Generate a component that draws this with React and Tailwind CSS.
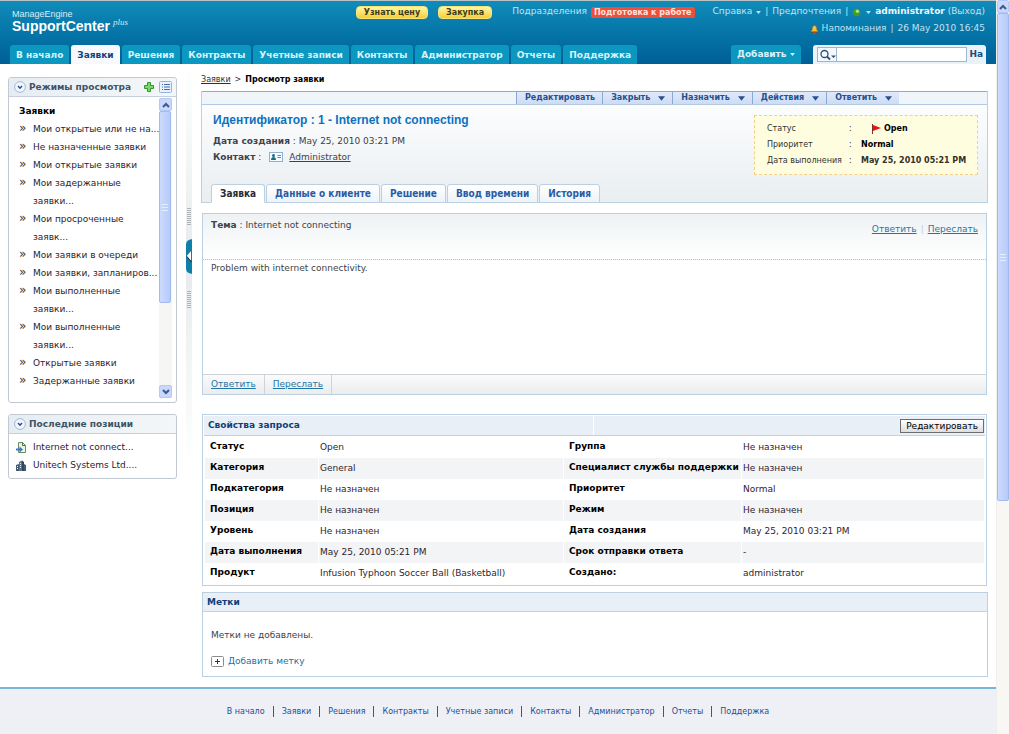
import React, { useState } from 'react'

const NAV = ['В начало', 'Заявки', 'Решения', 'Контракты', 'Учетные записи', 'Контакты', 'Администратор', 'Отчеты', 'Поддержка']

const VIEWS = [
  ['Мои открытые или не на...'],
  ['Не назначенные заявки'],
  ['Мои открытые заявки'],
  ['Мои задержанные', 'заявки...'],
  ['Мои просроченные', 'заявк...'],
  ['Мои заявки в очереди'],
  ['Мои заявки, запланиров...'],
  ['Мои выполненные', 'заявки...'],
  ['Мои выполненные', 'заявки...'],
  ['Открытые заявки'],
  ['Задержанные заявки'],
]

const ACTIONS = [
  { label: 'Редактировать', menu: false },
  { label: 'Закрыть', menu: true },
  { label: 'Назначить', menu: true },
  { label: 'Действия', menu: true },
  { label: 'Ответить', menu: true },
]

const TABS = ['Заявка', 'Данные о клиенте', 'Решение', 'Ввод времени', 'История']

const PROPS = [
  ['Статус', 'Open', 'Группа', 'Не назначен'],
  ['Категория', 'General', 'Специалист службы поддержки', 'Не назначен'],
  ['Подкатегория', 'Не назначен', 'Приоритет', 'Normal'],
  ['Позиция', 'Не назначен', 'Режим', 'Не назначен'],
  ['Уровень', 'Не назначен', 'Дата создания', 'May 25, 2010 03:21 PM'],
  ['Дата выполнения', 'May 25, 2010 05:21 PM', 'Срок отправки ответа', '-'],
  ['Продукт', 'Infusion Typhoon Soccer Ball (Basketball)', 'Создано:', 'administrator'],
]

const Caret = ({ className }) => (
  <svg className={className} viewBox="0 0 8 5" aria-hidden="true">
    <path d="M0 0h8L4 5z" fill="currentColor" />
  </svg>
)

const Chevron = ({ up }) => (
  <svg className="w-[8px] h-[6px] text-[#3d5a8c]" viewBox="0 0 8 6" fill="none" stroke="currentColor" strokeWidth="2" aria-hidden="true">
    <path d={up ? 'M1 5l3-3 3 3' : 'M1 1l3 3 3-3'} />
  </svg>
)

const ScrollButton = ({ up, label }) => (
  <button
    aria-label={label}
    className="w-full h-[13px] shrink-0 flex items-center justify-center rounded-xs border border-[#b4c8f6] bg-[#c9d8fc]"
  >
    <Chevron up={up} />
  </button>
)

const Thumb = ({ className }) => (
  <div className={`flex items-center justify-center rounded-xs border border-[#a3baf0] bg-gradient-to-r from-[#cbdafd] to-[#b7cbfb] ${className}`}>
    <div className="w-[6px] h-[7px] border-y border-[#e6eefe] flex items-center">
      <div className="w-full h-px bg-[#e6eefe]" />
    </div>
  </div>
)

const Logo = () => (
  <div className="pt-[9px] pl-3 text-white font-['Liberation_Sans',sans-serif]">
    <div className="text-[9px] leading-[9px] text-[#d8eef8]">ManageEngine</div>
    <div className="flex items-start">
      <span className="text-[14px] leading-[15px] font-bold">SupportCenter</span>
      <span className="pl-[3px] text-[9px] leading-[6px] italic text-[#cfe8f5] font-['Liberation_Serif',serif]">plus</span>
    </div>
  </div>
)

const TopLinks = () => (
  <div className="pr-[11px] text-[9px] text-[#c3e2f1] whitespace-nowrap">
    <div className="h-[21px] pt-px flex items-center justify-end">
      <button className="h-[13px] px-[7px] rounded border border-[#f7e27a] bg-gradient-to-b from-[#fff6a0] to-[#f6cf2c] text-[8px] leading-[11px] font-bold text-[#3f3a14]">
        Узнать цену
      </button>
      <button className="ml-[10px] h-[13px] px-[7px] rounded border border-[#f7e27a] bg-gradient-to-b from-[#fff6a0] to-[#f6cf2c] text-[8px] leading-[11px] font-bold text-[#3f3a14]">
        Закупка
      </button>
      <a href="#" className="ml-5">Подразделения</a>
      <a href="#" className="ml-1 h-[11px] px-[3px] rounded-xs bg-[#ee4f3c] text-[8px] leading-[11px] font-bold text-[#fde3dd]">
        Подготовка к работе
      </a>
      <a href="#" className="ml-[18px] flex items-center gap-1">
        Справка
        <Caret className="w-[5px] h-[3px]" />
      </a>
      <span className="px-1">|</span>
      <a href="#">Предпочтения</a>
      <span className="px-1">|</span>
      <a href="#" aria-label="Статус" className="mr-1 flex items-center gap-[5px]">
        <svg className="w-[9px] h-[9px]" viewBox="0 0 9 9" aria-hidden="true">
          <circle cx="4.5" cy="4.5" r="3.8" fill="#3f9d2c" />
          <circle cx="5.4" cy="3.2" r="1.7" fill="#b7e36d" />
        </svg>
        <Caret className="w-[5px] h-[3px]" />
      </a>
      <span>
        <b className="text-[#eaf6fb]">administrator</b> (<a href="#">Выход</a>)
      </span>
    </div>
    <div className="h-[14px] flex items-center justify-end">
      <svg className="w-[9px] h-[9px] mr-[3px]" viewBox="0 0 10 10" aria-hidden="true">
        <path d="M5 .5C3 .8 2.7 3 2.5 5L1 7.5h8L7.500 5C7.300 3 7 .8 5 .5z" fill="#f9c136" stroke="#b5701a" strokeWidth=".6" />
        <path d="M1 7.500h8v1H1z" fill="#8e3d12" />
        <circle cx="5" cy="9" r="1" fill="#d9541f" />
      </svg>
      <a href="#">Напоминания</a>
      <span className="px-1">|</span>
      <span>26 May 2010 16:45</span>
    </div>
  </div>
)

const Header = () => (
  <header className="h-[64px] flex flex-col justify-between border-t border-[#b9c3c7] bg-gradient-to-b from-[#108cb9] to-[#005f97]">
    <div className="flex justify-between">
      <Logo />
      <TopLinks />
    </div>
    <div className="flex items-end justify-between pl-[10px] pr-[10px] text-[9px] font-bold whitespace-nowrap">
      <nav className="flex gap-[2px]">
        {NAV.map((item) => (
          <a
            key={item}
            href="#"
            className={`h-[19px] px-[6px] leading-[20px] rounded-t-[3px] ${item === 'Заявки' ? 'bg-[#f7f9fc] text-[#123f80]' : 'bg-[#0b97c0] text-[#d9f3fb]'}`}
          >
            {item}
          </a>
        ))}
      </nav>
      <div className="flex items-end gap-3">
        <button className="h-[19px] px-[6px] flex items-center gap-1 rounded-t-[3px] bg-[#0b97c0] text-[#d9f3fb]">
          Добавить
          <Caret className="w-[5px] h-[3px]" />
        </button>
        <form className="h-[19px] pl-1 pr-[3px] flex items-center rounded-t-[3px] bg-[#e9f2f9]" onSubmit={(e) => e.preventDefault()}>
          <button type="button" aria-label="Область поиска" className="w-5 h-[15px] flex items-center justify-center border border-[#9fb6cf] bg-[#f4f8fc] text-[#2d5079]">
            <svg className="w-[17px] h-[12px]" viewBox="0 0 17 12" fill="none" aria-hidden="true">
              <circle cx="5.500" cy="5" r="3.500" stroke="currentColor" strokeWidth="1.300" />
              <path d="M8 7.500l3 3" stroke="currentColor" strokeWidth="1.800" />
              <path d="M12 6.500h5L14.500 9z" fill="currentColor" />
            </svg>
          </button>
          <input aria-label="Поиск" className="w-[130px] h-[15px] px-1 border border-l-0 border-[#9fb6cf] bg-white text-[9px] font-normal" />
          <button className="pl-[2px] text-[#1b4b80]">На</button>
        </form>
      </div>
    </div>
  </header>
)

const PanelTitle = ({ children, tools }) => (
  <div className="h-[19px] pl-[5px] pr-1 flex items-center rounded-t-[3px] border-b border-[#c6cfdb] bg-gradient-to-r from-[#e6edf2] to-[#f4f7f9]">
    <svg className="w-[12px] h-[12px] mr-[3px]" viewBox="0 0 12 12" fill="none" aria-hidden="true">
      <circle cx="6" cy="6" r="5.400" fill="#f2f7fd" stroke="#9db8da" />
      <path d="M4 5l2 2.200L8 5" stroke="#2a4fa0" strokeWidth="1.500" />
    </svg>
    <h2 className="flex-1 pt-[2px] text-[9px] font-bold text-[#3c5467]">{children}</h2>
    {tools}
  </div>
)

const Sidebar = () => (
  <aside className="w-[169px] shrink-0 pt-[13px] flex flex-col gap-[11px] text-[9px] text-[#2a2430]">
    <section className="rounded-[3px] border border-[#c3c9d2]">
      <PanelTitle
        tools={
          <div className="flex items-center gap-[5px]">
            <button aria-label="Добавить режим">
              <svg className="block w-[10px] h-[10px]" viewBox="0 0 10 10" aria-hidden="true">
                <path d="M3.500.5h3v3h3v3h-3v3h-3v-3h-3v-3h3z" fill="#7ed36a" stroke="#2f9a2c" />
              </svg>
            </button>
            <button aria-label="Список режимов">
              <svg className="block w-[13px] h-[12px]" viewBox="0 0 13 12" aria-hidden="true">
                <rect x=".5" y=".5" width="12" height="11" rx="1" fill="#eaf2fc" stroke="#94b4dc" />
                <path d="M3 3.500h1M3 6h1M3 8.500h1M5 3.500h6M5 6h6M5 8.500h6" stroke="#3d6db0" />
              </svg>
            </button>
          </div>
        }
      >
        Режимы просмотра
      </PanelTitle>
      <div className="h-[305px] flex">
        <div className="flex-1 pl-[10px] pt-[5px] leading-[18px] whitespace-nowrap">
          <h3 className="font-bold text-black">Заявки</h3>
          <ul>
            {VIEWS.map((lines, i) => (
              <li key={i} className="flex">
                <span className="w-[14px] text-[12px] leading-[16px] text-[#2f3d2e]" aria-hidden="true">»</span>
                <a href="#">
                  {lines.map((line) => (
                    <span key={line} className="block">{line}</span>
                  ))}
                </a>
              </li>
            ))}
          </ul>
        </div>
        <div className="w-[13px] mr-1 mb-1 mt-px flex flex-col justify-between bg-[#f6f6f4]">
          <div>
            <ScrollButton up label="Вверх" />
            <Thumb className="w-[12px] h-[192px]" />
          </div>
          <ScrollButton label="Вниз" />
        </div>
      </div>
    </section>

    <section className="rounded-[3px] border border-[#c3c9d2]">
      <PanelTitle>Последние позиции</PanelTitle>
      <ul className="px-[7px] pt-1 pb-1 leading-[18px]">
        <li className="flex items-center gap-[7px]">
          <svg className="w-[10px] h-[11px]" viewBox="0 0 10 11" aria-hidden="true">
            <path d="M2.500.5h4l3 3v7h-7z" fill="#eef3e8" stroke="#6b8f5a" />
            <path d="M6.500.5v3h3" fill="none" stroke="#3d7a35" />
            <path d="M0 6.500h3.500v-2L7 7.500l-3.500 3v-2H0z" fill="#3c78d0" />
          </svg>
          <a href="#">Internet not connect...</a>
        </li>
        <li className="flex items-center gap-[7px]">
          <svg className="w-[10px] h-[11px]" viewBox="0 0 10 11" aria-hidden="true">
            <path d="M3 2l3-1.500V11H3z" fill="#5c7288" />
            <path d="M6 .5l2 1.500V11H6z" fill="#33475c" />
            <path d="M0 5l3-1v7H0zM8 4l2 1v6H8z" fill="#465c72" />
            <path d="M1 6.500h1M1 8.500h1M4 3.500h1M4 5.500h1M4 7.500h1" stroke="#dbe6f0" />
          </svg>
          <a href="#">Unitech Systems Ltd....</a>
        </li>
      </ul>
    </section>
  </aside>
)

const Grip = () => (
  <svg className="w-[4px] h-[17px]" viewBox="0 0 4 17" aria-hidden="true">
    <path d="M0 .5h4M0 2.500h4M0 4.500h4M0 6.500h4M0 8.500h4M0 10.500h4M0 12.500h4M0 14.500h4M0 16.500h4" stroke="#aeb4b8" />
  </svg>
)

const Splitter = () => (
  <div className="w-[6px] mx-[9px] h-[400px] shrink-0 pt-[144px] flex flex-col items-center gap-[14px] bg-gradient-to-b from-white via-[#e6eaec] to-white">
    <Grip />
    <button aria-label="Свернуть панель" className="w-[6px] h-[35px]">
      <svg className="block w-[6px] h-[35px]" viewBox="0 0 6 35" aria-hidden="true">
        <path d="M6 0C2 1 0 2 0 6v23c0 4 2 5 6 6z" fill="#0f7fa8" />
        <path d="M5 12v10L.8 17z" fill="#fff" />
        <path d="M.8 17.500L5.500 23" stroke="#12303c" />
      </svg>
    </button>
    <div className="pt-[3px]">
      <Grip />
    </div>
  </div>
)

const StatusBox = () => (
  <table className="w-[224px] h-[60px] border border-dashed border-[#f3cf8e] bg-[#fffde0] text-[8px] text-[#33302c] border-separate border-spacing-0">
    <tbody>
      <tr>
        <th className="w-[94px] pl-3 pt-1 text-left font-normal">Статус</th>
        <td className="w-3 pt-1">:</td>
        <td className="pt-1 font-bold text-black">
          <div className="pl-[11px] flex items-center gap-[3px]">
            <svg className="w-[9px] h-[10px]" viewBox="0 0 9 10" aria-hidden="true">
              <path d="M.5 0v10" stroke="#7a3030" />
              <path d="M1 1l8 3-8 3z" fill="#ee1111" />
            </svg>
            Open
          </div>
        </td>
      </tr>
      <tr>
        <th className="pl-3 text-left font-normal">Приоритет</th>
        <td>:</td>
        <td className="font-bold text-black">Normal</td>
      </tr>
      <tr>
        <th className="pl-3 pb-1 text-left font-normal whitespace-nowrap">Дата выполнения</th>
        <td className="pb-1">:</td>
        <td className="pb-1 font-bold whitespace-nowrap">May 25, 2010 05:21 PM</td>
      </tr>
    </tbody>
  </table>
)

const RequestHeader = () => {
  const [tab, setTab] = useState('Заявка')

  return (
    <section className="border border-[#bcd0e2] bg-gradient-to-b from-white to-[#e9eef1]">
      <div className="h-[14px] flex justify-end border-t border-b border-t-[#8aa9d3] border-b-[#b3cae4] -mt-px bg-[#f0f5fa] text-[8px] font-bold text-[#27508c]">
        {ACTIONS.map(({ label, menu }) => (
          <button key={label} className="pl-2 pr-[7px] flex items-center gap-2 border-l border-[#8aa9d3] bg-gradient-to-b from-[#dfe9fa] to-[#cddcf5]">
            {label}
            {menu && <Caret className="w-[7px] h-[5px]" />}
          </button>
        ))}
        <div className="w-[88px]" />
      </div>
      <div className="pl-[11px] pr-[9px] pt-[7px] flex justify-between">
        <div className="text-[9px] leading-[16px] text-[#40424a]">
          <h1 className="mb-[5px] text-[12px] leading-[16px] font-bold text-[#0c72c0] font-['Liberation_Sans',sans-serif]">
            Идентификатор : 1 - Internet not connecting
          </h1>
          <p><b>Дата создания</b> : May 25, 2010 03:21 PM</p>
          <p className="flex items-center">
            <span><b>Контакт</b> :</span>
            <svg className="w-[14px] h-[10px] ml-2 mr-[6px]" viewBox="0 0 14 10" aria-hidden="true">
              <rect x=".5" y=".5" width="13" height="9" fill="#f5fafe" stroke="#8fb2d0" />
              <circle cx="4.500" cy="3.500" r="1.500" fill="#1c6d80" />
              <path d="M2 8c0-4 5-4 5 0z" fill="#1c6d80" />
              <path d="M8.500 3.500H12M8.500 5.500H12" stroke="#5c86b5" />
            </svg>
            <a href="#" className="underline">Administrator</a>
          </p>
        </div>
        <div className="pt-[3px]">
          <StatusBox />
        </div>
      </div>
      <div role="tablist" className="mt-[9px] -mb-px pl-[9px] flex gap-px text-[10px] font-bold font-['DejaVu_Sans_Condensed','DejaVu_Sans',sans-serif]">
        {TABS.map((item) => (
          <button
            key={item}
            role="tab"
            aria-selected={tab === item}
            onClick={() => setTab(item)}
            className={`h-[19px] px-2 rounded-t-[3px] border ${tab === item ? 'border-[#bcd0e2] border-b-white bg-white text-[#2b2b33]' : 'border-[#bcd0e2] bg-gradient-to-b from-white to-[#edf3f9] text-[#2a5ba4]'}`}
          >
            {item}
          </button>
        ))}
      </div>
    </section>
  )
}

const Conversation = () => (
  <section className="mt-[10px] ml-px mr-px border border-[#bcd0e2] text-[9px] text-[#40424a]">
    <div className="h-[46px] px-2 flex justify-between border-b border-dotted border-[#b5c3cf] bg-gradient-to-b from-[#eef2f4] to-white">
      <p className="pt-[5px]"><b>Тема</b> : Internet not connecting</p>
      <div className="pt-[9px] text-[#1f77a8]">
        <a href="#" className="underline">Ответить</a>
        <span className="px-[4px] text-[#c3ced8]">|</span>
        <a href="#" className="underline">Переслать</a>
      </div>
    </div>
    <p className="h-[114px] px-2 pt-[2px]">Problem with internet connectivity.</p>
    <div className="h-[20px] flex border-t border-[#cdd3d9] bg-gradient-to-b from-[#fbfbfb] to-[#eaecee] text-[#1f77a8]">
      <a href="#" className="px-2 leading-[18px] underline border-r border-[#cdd3d9]">Ответить</a>
      <a href="#" className="px-2 leading-[18px] underline border-r border-[#cdd3d9]">Переслать</a>
    </div>
  </section>
)

const Properties = () => (
  <section className="mt-[19px] ml-px mr-px p-px border border-[#bcd0e2] text-[9px]">
    <div className="h-[20px] pl-1 pr-px flex items-center border-b border-[#bcd3ee] bg-[#e9eff7]">
      <h2 className="w-[386px] h-full leading-[19px] font-bold text-[#0f3f78] border-r border-white">Свойства запроса</h2>
      <button className="ml-auto h-[14px] px-[5px] border border-[#6d6d6d] bg-gradient-to-b from-white to-[#dedede] text-[9px] leading-[12px] text-black">
        Редактировать
      </button>
    </div>
    <table className="mt-px w-full table-fixed border-separate border-spacing-x-[1px] border-spacing-y-0">
      <tbody>
        {PROPS.map(([k1, v1, k2, v2], i) => (
          <tr key={k1} className={`h-[21px] whitespace-nowrap ${i % 2 ? 'bg-[#f2f4f6]' : ''}`}>
            <th className="w-[113px] pl-[5px] pb-[2px] text-left text-black">{k1}</th>
            <td className="w-[244px] pl-px pt-px text-[#30242f]">{v1}</td>
            <th className="w-[177px] pl-[5px] pb-[2px] text-left text-black">{k2}</th>
            <td className="pl-px pt-px text-[#30242f]">{v2}</td>
          </tr>
        ))}
      </tbody>
    </table>
  </section>
)

const Tags = () => (
  <section className="mt-[6px] ml-px border border-[#bcd0e2] text-[9px]">
    <h2 className="h-[19px] pl-1 leading-[19px] font-bold text-[#0f3f78] border-b border-[#bcd3ea] bg-[#e9eff7]">Метки</h2>
    <div className="h-[64px] pl-2 pt-[15px] leading-[16px]">
      <p className="text-[#40424a]">Метки не добавлены.</p>
      <button className="mt-[10px] flex items-center gap-1 text-[#1f6fa0]">
        <svg className="w-[13px] h-[11px]" viewBox="0 0 13 11" aria-hidden="true">
          <rect x=".5" y=".5" width="12" height="10" rx="1" fill="#fff" stroke="#8c8c8c" />
          <path d="M4 5.500h5M6.500 3v5" stroke="#333" />
        </svg>
        Добавить метку
      </button>
    </div>
  </section>
)

const Footer = () => (
  <footer className="h-[47px] flex justify-center border-t-2 border-[#76b6d8] bg-[#eff0f5]">
    <ul className="pt-[17px] flex text-[8px] leading-[11px] text-[#1d4f96] whitespace-nowrap">
      {NAV.map((item, i) => (
        <li key={item} className={`h-[11px] px-2 ${i ? 'border-l border-[#555]' : ''}`}>
          <a href="#">{item}</a>
        </li>
      ))}
    </ul>
  </footer>
)

export default function App() {
  return (
    <div className="flex min-h-screen bg-white font-['DejaVu_Sans',sans-serif]">
      <div className="flex-1 min-w-0 flex flex-col">
        <Header />
        <div className="flex-1 flex items-start pl-2 pr-2">
          <Sidebar />
          <Splitter />
          <main className="flex-1 min-w-0 pt-2 pb-[10px]">
            <nav className="h-[19px] leading-[15px] text-[8px] text-[#33302c]">
              <a href="#" className="underline">Заявки</a>
              <span className="px-1">&gt;</span>
              <b className="text-black">Просмотр заявки</b>
            </nav>
            <RequestHeader />
            <Conversation />
            <Properties />
            <Tags />
          </main>
        </div>
        <Footer />
      </div>
      <div className="w-[13px] shrink-0 border-l border-[#eeeeea] bg-[#f8f7f4]">
        <ScrollButton up label="Прокрутить вверх" />
        <Thumb className="h-[488px]" />
      </div>
    </div>
  )
}
